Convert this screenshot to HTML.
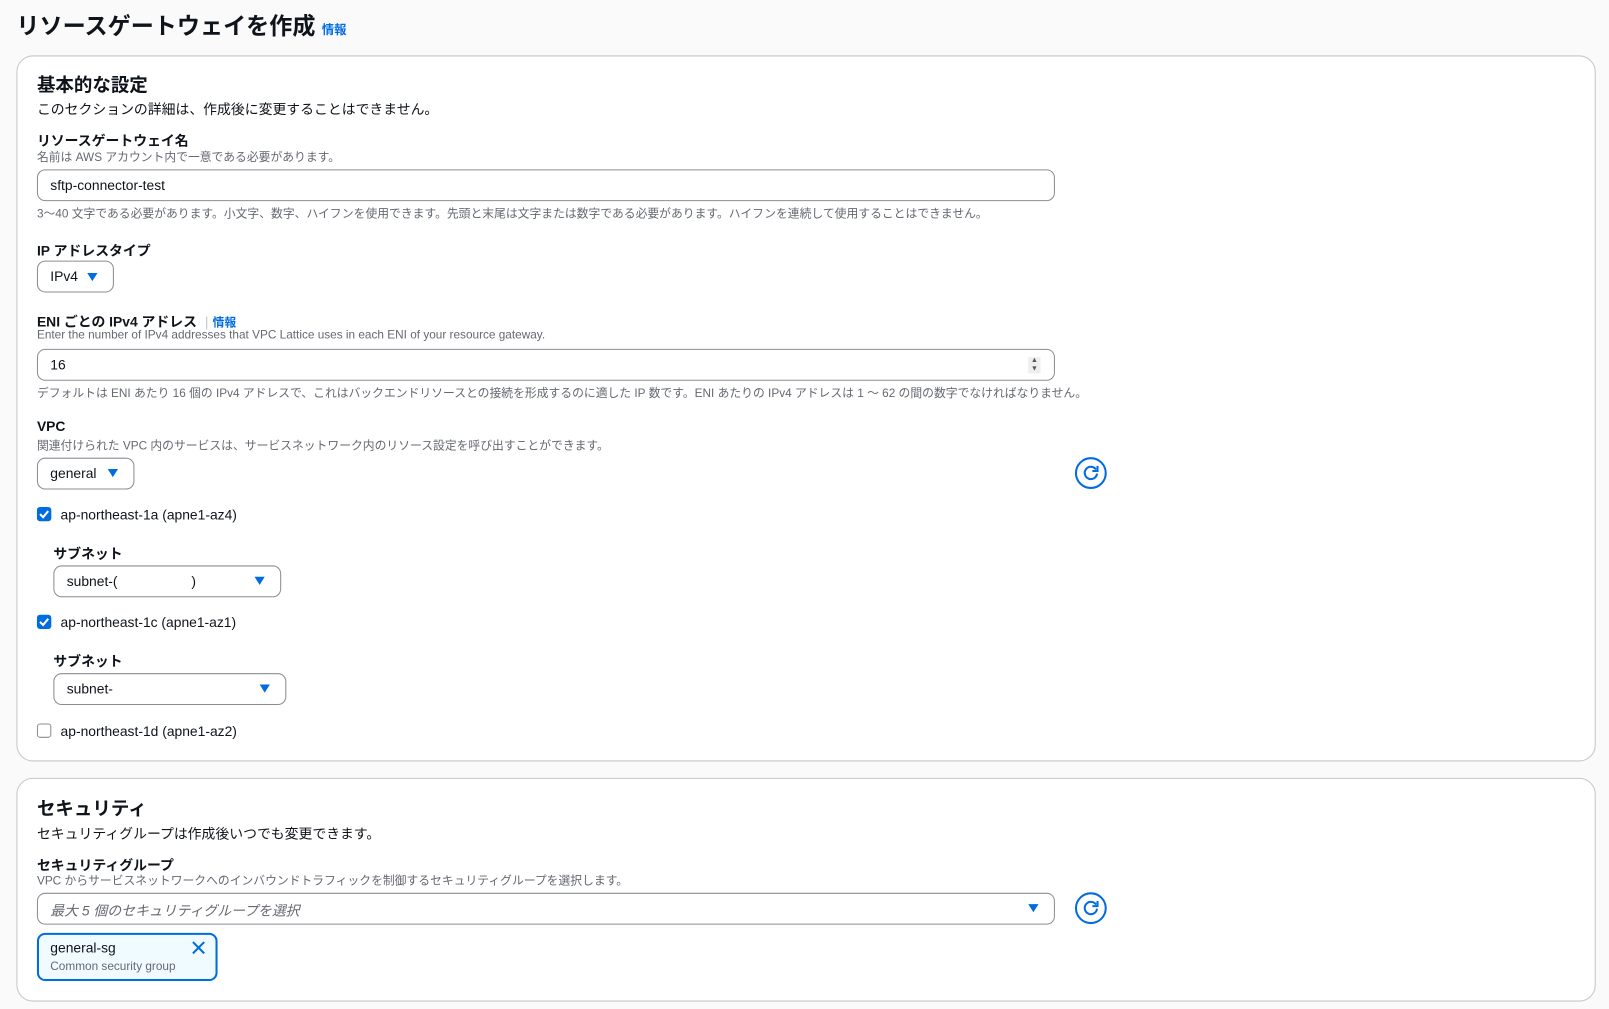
<!DOCTYPE html>
<html><head><meta charset="utf-8">
<style>
html,body{margin:0;padding:0;width:1609px;height:1009px;overflow:hidden;background:#fafafa;}
#w{position:absolute;left:0;top:0;width:1568px;height:983px;transform:scale(1.0262);transform-origin:0 0;font-family:"Liberation Sans","Noto Sans CJK JP",sans-serif;color:#0f141a;}
.a{position:absolute;white-space:nowrap;}
.card{position:absolute;background:#fff;border:1px solid #c6c6cd;border-radius:16px;box-sizing:border-box;}
.h2{font-size:18px;font-weight:700;}
.d{font-size:13.5px;color:#0f141a;}
.lb{font-size:13.5px;font-weight:700;}
.hint{font-size:11.5px;color:#656871;}
.box{position:absolute;border:1px solid #8c8c94;border-radius:8px;background:#fff;box-sizing:border-box;font-size:13.5px;display:flex;align-items:center;padding-left:12px;}
.tri{position:absolute;width:0;height:0;border-left:5.5px solid transparent;border-right:5.5px solid transparent;border-top:8px solid #006ce0;}
.cb{position:absolute;width:14px;height:14px;border-radius:3px;box-sizing:border-box;}
.info{color:#006ce0;font-size:11.5px;font-weight:700;}
</style></head><body><div id="w">
<div class="a" style="left:16px;top:8px;font-size:22.5px;font-weight:700;">リソースゲートウェイを作成 <span class="info" style="font-size:12px;">情報</span></div>

<div class="card" style="left:16px;top:54px;width:1539px;height:688px;"></div>
<div class="a h2" style="left:36px;top:69px;">基本的な設定</div>
<div class="a d" style="left:36px;top:95px;">このセクションの詳細は、作成後に変更することはできません。</div>
<div class="a lb" style="left:36px;top:126px;">リソースゲートウェイ名</div>
<div class="a hint" style="left:36px;top:145px;">名前は AWS アカウント内で一意である必要があります。</div>
<div class="box" style="left:36px;top:165px;width:992px;height:31px;">sftp-connector-test</div>
<div class="a hint" style="left:36px;top:200px;">3〜40 文字である必要があります。小文字、数字、ハイフンを使用できます。先頭と末尾は文字または数字である必要があります。ハイフンを連続して使用することはできません。</div>
<div class="a lb" style="left:36px;top:233px;">IP アドレスタイプ</div>
<div class="box" style="left:36px;top:254px;width:75px;height:31px;">IPv4</div>
<div class="tri" style="left:85px;top:266px;"></div>
<div class="a lb" style="left:36px;top:302px;">ENI ごとの IPv4 アドレス <span style="color:#c6c6cd;font-weight:400;margin:0 4px;">|</span><span class="info">情報</span></div>
<div class="a hint" style="left:36px;top:321px;">Enter the number of IPv4 addresses that VPC Lattice uses in each ENI of your resource gateway.</div>
<div class="box" style="left:36px;top:340px;width:992px;height:31px;">16</div>
<div class="a" style="left:1002px;top:348px;width:12px;height:16px;background:#eee;font-size:7px;line-height:8px;text-align:center;color:#555;">▲<br>▼</div>
<div class="a hint" style="left:36px;top:375px;">デフォルトは ENI あたり 16 個の IPv4 アドレスで、これはバックエンドリソースとの接続を形成するのに適した IP 数です。ENI あたりの IPv4 アドレスは 1 〜 62 の間の数字でなければなりません。</div>
<div class="a lb" style="left:36px;top:408px;">VPC</div>
<div class="a hint" style="left:36px;top:426px;">関連付けられた VPC 内のサービスは、サービスネットワーク内のリソース設定を呼び出すことができます。</div>
<div class="box" style="left:36px;top:446px;width:95px;height:31px;">general</div>
<div class="tri" style="left:105px;top:457px;"></div>
<svg class="a" style="left:1047px;top:445px;" width="32" height="32" viewBox="0 0 32 32"><circle cx="16" cy="16" r="14.5" fill="none" stroke="#006ce0" stroke-width="2"/><path d="M21 12.5A6 6 0 1 0 22 16.5" fill="none" stroke="#006ce0" stroke-width="2"/><path d="M22.5 9v5h-5" fill="none" stroke="#006ce0" stroke-width="2"/></svg>

<div class="cb" style="left:36px;top:494px;background:#006ce0;"><svg width="14" height="14"><path d="M3 7l3 3 5-6" fill="none" stroke="#fff" stroke-width="2"/></svg></div>
<div class="a d" style="left:59px;top:494px;">ap-northeast-1a (apne1-az4)</div>
<div class="a lb" style="left:52px;top:528px;">サブネット</div>
<div class="box" style="left:52px;top:551px;width:222px;height:31px;">subnet-(<span style="margin-left:72px;">)</span></div>
<div class="tri" style="left:248px;top:562px;"></div>
<div class="cb" style="left:36px;top:599px;background:#006ce0;"><svg width="14" height="14"><path d="M3 7l3 3 5-6" fill="none" stroke="#fff" stroke-width="2"/></svg></div>
<div class="a d" style="left:59px;top:599px;">ap-northeast-1c (apne1-az1)</div>
<div class="a lb" style="left:52px;top:633px;">サブネット</div>
<div class="box" style="left:52px;top:656px;width:227px;height:31px;">subnet-</div>
<div class="tri" style="left:253px;top:667px;"></div>
<div class="cb" style="left:36px;top:705px;border:1.5px solid #8c8c94;background:#fff;"></div>
<div class="a d" style="left:59px;top:705px;">ap-northeast-1d (apne1-az2)</div>

<div class="card" style="left:16px;top:758px;width:1539px;height:218px;"></div>
<div class="a h2" style="left:36px;top:774px;">セキュリティ</div>
<div class="a d" style="left:36px;top:801px;">セキュリティグループは作成後いつでも変更できます。</div>
<div class="a lb" style="left:36px;top:832px;">セキュリティグループ</div>
<div class="a hint" style="left:36px;top:850px;">VPC からサービスネットワークへのインバウンドトラフィックを制御するセキュリティグループを選択します。</div>
<div class="box" style="left:36px;top:870px;width:992px;height:31px;color:#656871;font-style:italic;">最大 5 個のセキュリティグループを選択</div>
<div class="tri" style="left:1002px;top:881px;"></div>
<svg class="a" style="left:1047px;top:869px;" width="32" height="32" viewBox="0 0 32 32"><circle cx="16" cy="16" r="14.5" fill="none" stroke="#006ce0" stroke-width="2"/><path d="M21 12.5A6 6 0 1 0 22 16.5" fill="none" stroke="#006ce0" stroke-width="2"/><path d="M22.5 9v5h-5" fill="none" stroke="#006ce0" stroke-width="2"/></svg>
<div class="a" style="left:36px;top:909px;width:176px;height:47px;box-sizing:border-box;border:2px solid #006ce0;border-radius:8px;background:#f0fbff;"></div>
<div class="a d" style="left:49px;top:916px;">general-sg</div>
<div class="a hint" style="left:49px;top:936px;">Common security group</div>
<svg class="a" style="left:186px;top:916px;" width="15" height="15"><path d="M2 2l11 11M13 2L2 13" stroke="#006ce0" stroke-width="2"/></svg>
</div></body></html>
